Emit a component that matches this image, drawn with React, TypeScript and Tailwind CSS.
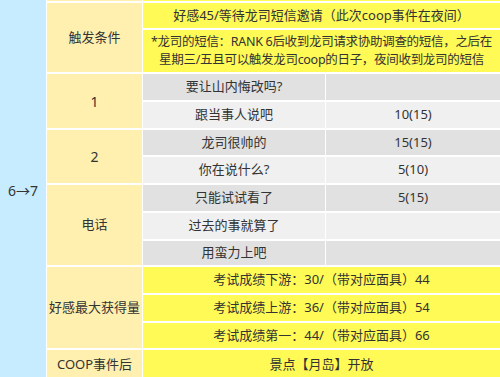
import React from "react";

const gray = ["bg-[#e1e1e1]", "bg-[#f0f0f0]"];

type Pick = { text: string; value?: string };

const picks: Pick[] = [
  { text: "要让山内悔改吗?" },
  { text: "跟当事人说吧", value: "10(15)" },
  { text: "龙司很帅的", value: "15(15)" },
  { text: "你在说什么?", value: "5(10)" },
  { text: "只能试试看了", value: "5(15)" },
  { text: "过去的事就算了" },
  { text: "用蛮力上吧" },
];

const rowStart = [
  "row-start-4",
  "row-start-5",
  "row-start-6",
  "row-start-7",
  "row-start-8",
  "row-start-9",
  "row-start-10",
];

const cell = "flex items-center justify-center text-center";

export default function App() {
  return (
    <div className="h-[377px] w-[500px] overflow-hidden bg-white font-['Noto_Sans','Noto_Sans_CJK_SC',sans-serif] text-[13px] text-[#333]">
      <div className="grid grid-cols-[46px_95px_182px_1fr] grid-rows-[1px_25px_42px_26px_26px_25px_26px_26px_26px_24px_26px_26px_25px_30px] gap-x-px gap-y-[2px]">
        {/* stage */}
        <div className={`${cell} col-start-1 row-span-14 row-start-1 bg-[#c8ecff] text-[14px]`}>
          6→7
        </div>

        {/* cut-off row above */}
        <div className="col-start-2 row-start-1 bg-[#fff0b0]" />
        <div className="col-span-2 col-start-3 row-start-1 bg-[#fffa55]" />

        {/* labels */}
        <div className={`${cell} col-start-2 row-span-2 row-start-2 bg-[#fff0b0]`}>触发条件</div>
        <div className={`${cell} col-start-2 row-span-2 row-start-4 bg-[#fff0b0] text-[14px]`}>1</div>
        <div className={`${cell} col-start-2 row-span-2 row-start-6 bg-[#fff0b0] text-[14px]`}>2</div>
        <div className={`${cell} col-start-2 row-span-3 row-start-8 bg-[#fff0b0]`}>电话</div>
        <div className={`${cell} col-start-2 row-span-3 row-start-11 bg-[#fff0b0]`}>好感最大获得量</div>
        <div className={`${cell} col-start-2 row-start-14 bg-[#fff0b0]`}>COOP事件后</div>

        {/* trigger */}
        <div className={`${cell} col-span-2 col-start-3 row-start-2 bg-[#fffa55]`}>
          好感45/等待龙司短信邀请（此次coop事件在夜间）
        </div>
        <div className={`${cell} col-span-2 col-start-3 row-start-3 bg-[#fffa55] pb-px leading-[18px]`}>
          <span className="whitespace-nowrap text-[12.5px] tracking-[-0.3px]">
            *龙司的短信：RANK 6后收到龙司请求协助调查的短信，之后在
            <br />
            星期三/五且可以触发龙司coop的日子，夜间收到龙司的短信
          </span>
        </div>

        {/* answers */}
        {picks.map((p, i) => (
          <React.Fragment key={p.text}>
            <div className={`${cell} col-start-3 ${rowStart[i]} ${gray[i % 2]}`}>{p.text}</div>
            <div className={`${cell} col-start-4 ${rowStart[i]} ${gray[i % 2]}`}>{p.value}</div>
          </React.Fragment>
        ))}

        {/* max affection */}
        <div className={`${cell} col-span-2 col-start-3 row-start-11 bg-[#fffa55]`}>
          考试成绩下游：30/（带对应面具）44
        </div>
        <div className={`${cell} col-span-2 col-start-3 row-start-12 bg-[#fffa55]`}>
          考试成绩上游：36/（带对应面具）54
        </div>
        <div className={`${cell} col-span-2 col-start-3 row-start-13 bg-[#fffa55]`}>
          考试成绩第一：44/（带对应面具）66
        </div>
        <div className={`${cell} col-span-2 col-start-3 row-start-14 bg-[#fffa55]`}>
          景点【月岛】开放
        </div>
      </div>
    </div>
  );
}
